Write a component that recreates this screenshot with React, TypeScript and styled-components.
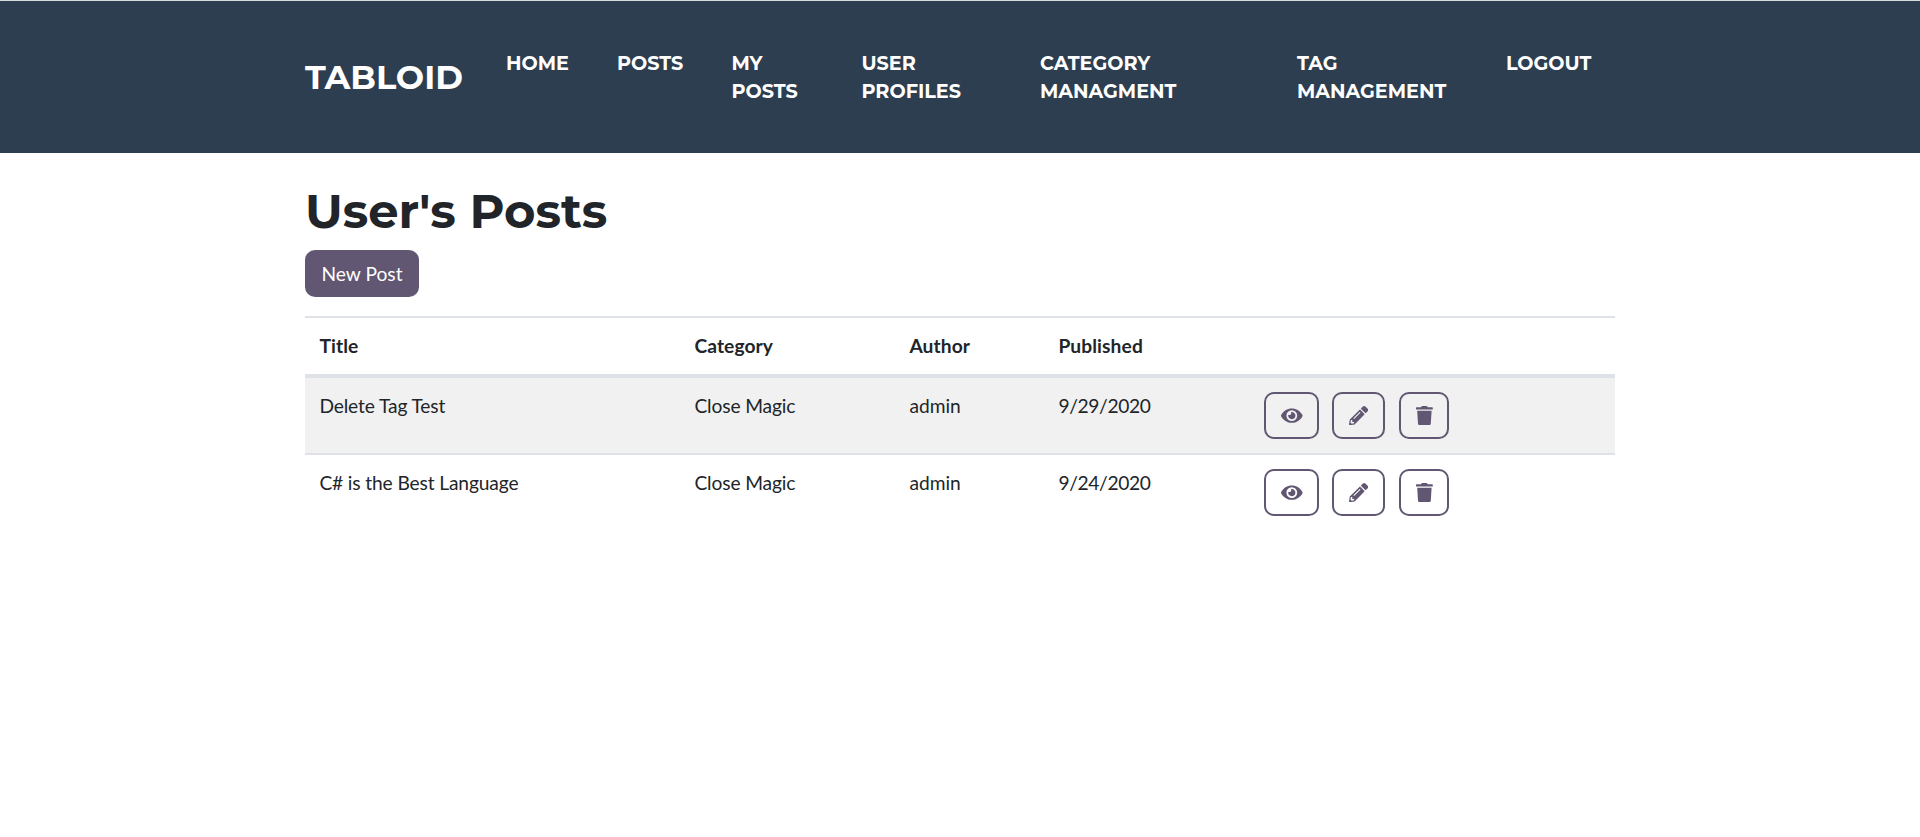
import React from "react";
import styled, { createGlobalStyle } from "styled-components";
import { FaEye, FaPencilAlt, FaTrash } from "react-icons/fa";

const GlobalStyle = createGlobalStyle`
  *, *::before, *::after { box-sizing: border-box; }
  body {
    margin: 0;
    background: #fff;
    color: #212529;
    font: 400 19.2px/28.8px Lato, sans-serif;
  }
`;

const Header = styled.header`
  height: 153px;
  border-top: 1px solid #d5dcdc;
  background: #2c3e50;
  color: #fff;
  font-family: Montserrat, Inter, sans-serif;
  font-weight: 700;
`;

const Container = styled.div`
  width: 1310px;
  margin: 0 auto;
`;

const NavRow = styled(Container)`
  display: flex;
  align-items: flex-start;
`;

const Brand = styled.a`
  width: 201px;
  padding-top: 50px;
  font-size: 33.6px;
  line-height: 52px;
`;

const NavItem = styled.a<{ $width: number }>`
  flex: none;
  width: ${(p) => p.$width}px;
  padding-top: 48px;
  font-size: 19.2px;
  line-height: 28px;
  white-space: pre-line;
`;

const Heading = styled.h1`
  margin: 0 0 10px;
  padding-top: 30px;
  font: 700 48px/57px Montserrat, Inter, sans-serif;
`;

const NewPost = styled.button`
  display: block;
  width: 114px;
  height: 47px;
  padding: 1px 0 0;
  border: 0;
  border-radius: 10px;
  background: #625772;
  color: #fff;
  font: inherit;
`;

const Table = styled.table`
  width: 100%;
  margin-top: 19px;
  table-layout: fixed;
  border-collapse: separate;
  border-spacing: 0;
`;

const HeadCell = styled.th`
  height: 60px;
  padding: 0 14.4px;
  border-top: 2px solid #dee2e6;
  border-bottom: 2px solid #dee2e6;
  text-align: left;
  font-weight: 700;
  letter-spacing: 0.1px;
`;

const Row = styled.tr`
  &:nth-child(odd) { background: #f1f1f1; }
`;

const Cell = styled.td<{ $spacing?: number }>`
  height: 77px;
  padding: 14px 14.4px 0;
  border-top: 2px solid #dee2e6;
  vertical-align: top;
  letter-spacing: ${(p) => p.$spacing ?? -0.13}px;
`;

const Actions = styled.div`
  display: flex;
  gap: 13px;
`;

const IconButton = styled.button<{ $width: number; $icon: number }>`
  display: flex;
  flex: none;
  align-items: center;
  justify-content: center;
  width: ${(p) => p.$width}px;
  height: 47px;
  padding: 0;
  border: 2px solid #625772;
  border-radius: 10px;
  background: transparent;
  color: #625772;

  &:last-child { margin-left: 1px; }

  svg {
    flex: none;
    width: ${(p) => p.$icon}px;
    height: 19.2px;
  }
`;

const links = [
  { label: "HOME", width: 111 },
  { label: "POSTS", width: 114.5 },
  { label: "MY\nPOSTS", width: 130 },
  { label: "USER\nPROFILES", width: 178.5 },
  { label: "CATEGORY\nMANAGMENT", width: 257 },
  { label: "TAG\nMANAGEMENT", width: 209 },
  { label: "LOGOUT", width: 100 },
];

const posts = [
  { title: "Delete Tag Test", category: "Close Magic", author: "admin", published: "9/29/2020" },
  { title: "C# is the Best Language", category: "Close Magic", author: "admin", published: "9/24/2020" },
];

export default function App() {
  return (
    <>
      <GlobalStyle />
      <Header>
        <NavRow as="nav">
          <Brand>TABLOID</Brand>
          {links.map((l) => (
            <NavItem key={l.label} $width={l.width}>{l.label}</NavItem>
          ))}
        </NavRow>
      </Header>
      <Container as="main">
        <Heading>User's Posts</Heading>
        <NewPost>New Post</NewPost>
        <Table>
          <colgroup>
            <col width="375" />
            <col width="215" />
            <col width="149" />
            <col width="206" />
            <col />
          </colgroup>
          <thead>
            <tr>
              <HeadCell>Title</HeadCell>
              <HeadCell>Category</HeadCell>
              <HeadCell>Author</HeadCell>
              <HeadCell>Published</HeadCell>
              <HeadCell />
            </tr>
          </thead>
          <tbody>
            {posts.map((p) => (
              <Row key={p.title}>
                <Cell>{p.title}</Cell>
                <Cell>{p.category}</Cell>
                <Cell $spacing={0}>{p.author}</Cell>
                <Cell $spacing={-0.34}>{p.published}</Cell>
                <Cell>
                  <Actions>
                    <IconButton $width={55} $icon={21.6} aria-label="View"><FaEye /></IconButton>
                    <IconButton $width={53} $icon={19.2} aria-label="Edit"><FaPencilAlt /></IconButton>
                    <IconButton $width={50} $icon={16.8} aria-label="Delete"><FaTrash /></IconButton>
                  </Actions>
                </Cell>
              </Row>
            ))}
          </tbody>
        </Table>
      </Container>
    </>
  );
}
